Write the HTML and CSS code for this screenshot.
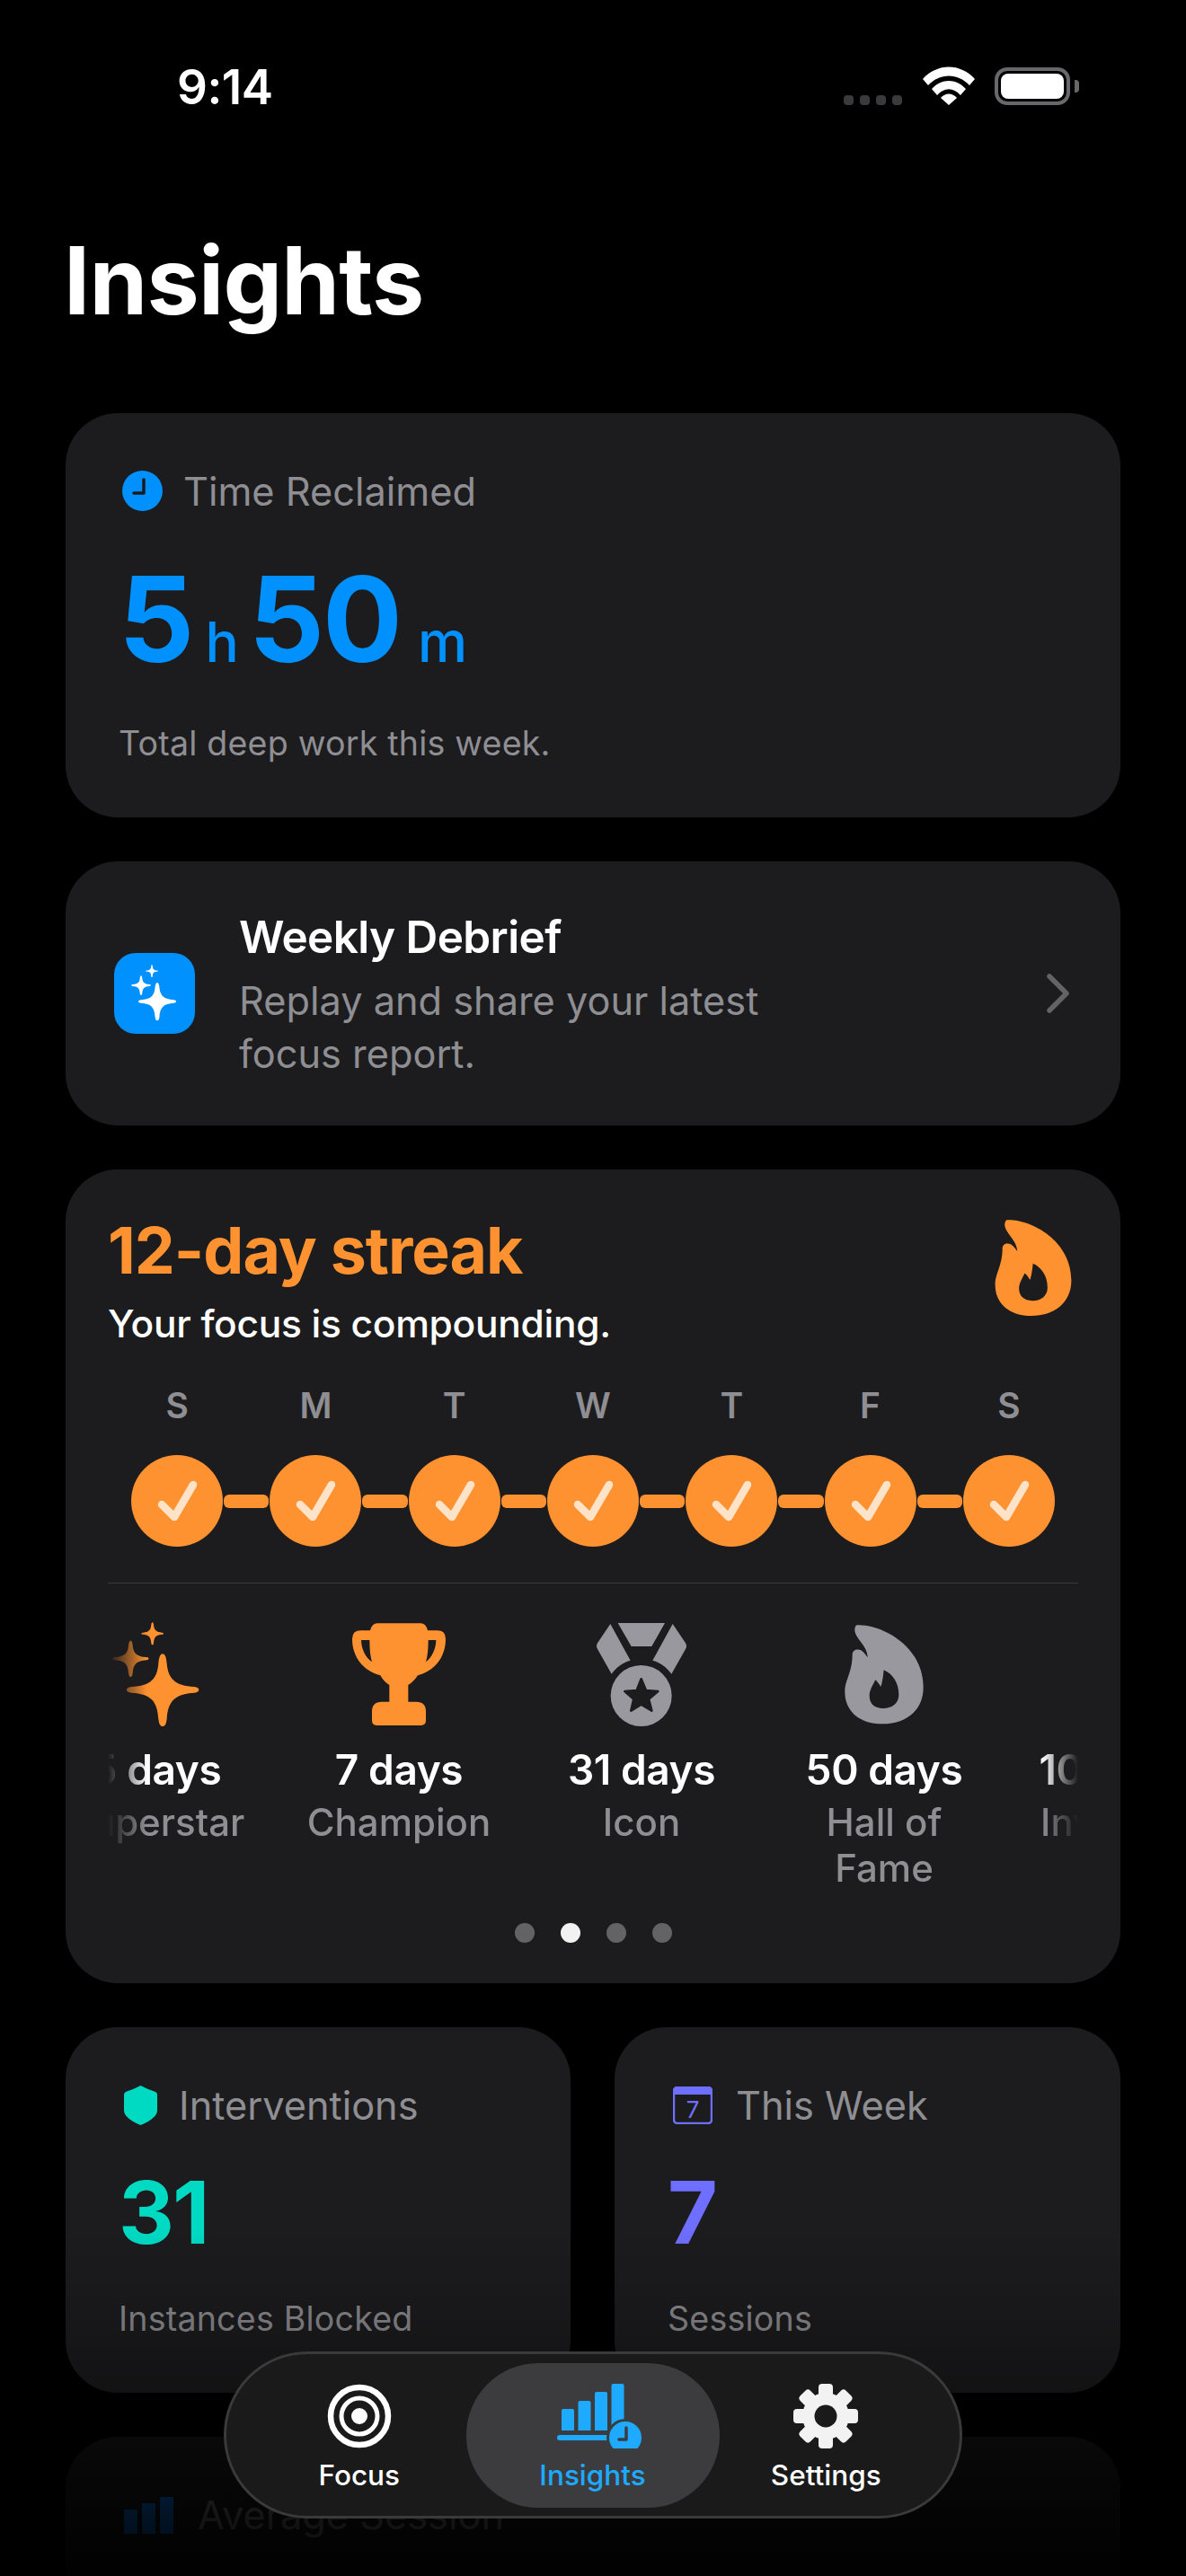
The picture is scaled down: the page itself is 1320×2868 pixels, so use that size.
FILE: index.html
```html
<!DOCTYPE html>
<html lang="en">
<head>
<meta charset="utf-8">
<title>Insights</title>
<link rel="stylesheet" href="styles.css">
</head>
<body>
<svg class="defs" width="0" height="0" aria-hidden="true">
  <defs>
    <path id="spark" d="M0 -120C8 -120 12 -108 14 -88C18 -38 41 -13 106 -10C126 -8 126 8 106 10C41 14 18 37 14 97C12 114 8 122 0 122C-8 122 -12 114 -14 97C-18 37 -39 14 -104 10C-126 8 -126 -8 -104 -10C-39 -13 -18 -38 -14 -88C-12 -108 -8 -120 0 -120Z"/>
    <path id="flame" fill-rule="evenodd" d="M1000 82C1080 78 1222 150 1222 290C1222 370 1160 412 1085 412C1010 412 960 370 960 305C960 265 985 240 985 180C985 165 1000 160 1012 165C1025 172 1032 185 1036 190C1036 150 990 125 993 95C994 88 996 83 1000 82ZM1090 232C1120 245 1140 275 1140 315C1140 345 1115 360 1088 360C1060 360 1042 345 1042 318C1042 300 1052 285 1062 265C1068 270 1075 280 1080 288C1085 275 1088 250 1090 232Z"/>
    <path id="tick" d="M-17 4L-3 18L18 -18" fill="none" stroke="#ffe3c9" stroke-width="8.500" stroke-linecap="round" stroke-linejoin="round"/>
  </defs>
</svg>
<div class="screen">
  <header class="status">
    <span class="clock">9:14</span>
    <div class="status-icons">
      <div class="signal"><i></i><i></i><i></i><i></i></div>
      <svg class="wifi" viewBox="0 0 58 43"><path d="M0 14C16 -4 42 -4 58 14L52 21C39 7 19 7 6 21Z"/><path d="M10 25C21 13 37 13 48 25L42 32C34 23 24 23 16 32Z"/><path d="M20 35C25 29 33 29 38 35L29 43Z"/></svg>
      <div class="battery"><div class="battery-fill"></div></div>
      <div class="battery-nub"></div>
    </div>
  </header>

  <h1 class="page-title">Insights</h1>

  <main class="cards">
    <section class="card card-time">
      <div class="head">
        <svg class="head-icon" viewBox="0 0 45 45"><circle cx="22.500" cy="22.500" r="22.500" fill="#0091ff"/><path d="M24 10V25H13" fill="none" stroke="#1c1c1e" stroke-width="3.500" stroke-linecap="round" stroke-linejoin="round"/></svg>
        <span class="head-label">Time Reclaimed</span>
      </div>
      <div class="big-time">
        <span>5</span><span class="unit">h</span><span class="num-gap">50</span><span class="unit unit-m">m</span>
      </div>
      <p class="caption">Total deep work this week.</p>
    </section>

    <section class="card card-debrief">
      <div class="debrief-icon">
        <svg viewBox="0 0 90 90"><use href="#spark" transform="translate(48 54) scale(.175)" fill="#fff"/><use href="#spark" transform="translate(30 36) scale(.09)" fill="#fff"/><use href="#spark" transform="translate(42 20) scale(.058)" fill="#fff"/></svg>
      </div>
      <div class="debrief-text">
        <h2 class="debrief-title">Weekly Debrief</h2>
        <p class="debrief-sub">Replay and share your latest focus report.</p>
      </div>
      <svg class="chevron" viewBox="0 0 27 44"><path d="M4 3L23 22L4 41" fill="none" stroke="#636366" stroke-width="5.500" stroke-linecap="round" stroke-linejoin="round"/></svg>
    </section>

    <section class="card card-streak">
      <div class="streak-top">
        <div>
          <h2 class="streak-title">12-day streak</h2>
          <p class="streak-sub">Your focus is compounding.</p>
        </div>
        <svg class="streak-flame" viewBox="955 75 272 340"><use href="#flame" fill="#ff9230"/></svg>
      </div>
      <div class="week-letters"><span>S</span><span>M</span><span>T</span><span>W</span><span>T</span><span>F</span><span>S</span></div>
      <div class="week-track">
        <svg class="day" viewBox="-51 -51 102 102"><use href="#tick"/></svg><i class="link"></i>
        <svg class="day" viewBox="-51 -51 102 102"><use href="#tick"/></svg><i class="link"></i>
        <svg class="day" viewBox="-51 -51 102 102"><use href="#tick"/></svg><i class="link"></i>
        <svg class="day" viewBox="-51 -51 102 102"><use href="#tick"/></svg><i class="link"></i>
        <svg class="day" viewBox="-51 -51 102 102"><use href="#tick"/></svg><i class="link"></i>
        <svg class="day" viewBox="-51 -51 102 102"><use href="#tick"/></svg><i class="link"></i>
        <svg class="day" viewBox="-51 -51 102 102"><use href="#tick"/></svg>
      </div>
      <div class="divider"></div>
      <div class="badges-clip">
        <div class="badges">
          <div class="badge">
            <svg class="badge-icon" viewBox="70 72 306 348"><use href="#spark" transform="translate(244 298)" fill="#ff9230"/><use href="#spark" transform="translate(137 194) scale(.5)" fill="#ff9230"/><use href="#spark" transform="translate(210 110) scale(.31)" fill="#ff9230"/></svg>
            <strong>5 days</strong><span>Superstar</span>
          </div>
          <div class="badge">
            <svg class="badge-icon" viewBox="858 72 348 348"><path fill="#ff9230" fill-rule="evenodd" d="M960 76H1105Q1122 76 1128 100H1160Q1188 100 1188 128C1188 190 1150 235 1095 250C1085 265 1075 275 1063 282V338H1090Q1122 338 1122 370V400Q1122 417 1105 417H958Q942 417 942 400V370Q942 338 975 338H1000V282C988 275 978 265 970 250C915 235 876 190 876 128Q876 100 905 100H936Q942 76 960 76ZM906 132C906 160 920 190 942 205C936 185 934 160 934 132ZM1156 132C1156 160 1142 190 1122 205C1128 185 1130 160 1130 132Z"/></svg>
            <strong>7 days</strong><span>Champion</span>
          </div>
          <div class="badge">
            <svg class="badge-icon" viewBox="110 72 348 348"><g fill="#98989e"><path d="M205 75H362L318 153H250Z"/><path d="M180 78L247 200C225 205 200 222 184 245L137 162Q131 152 137 142Z"/><path d="M388 78L321 200C343 205 368 222 384 245L431 162Q437 152 431 142Z"/><circle cx="283" cy="318" r="102"/></g><path fill="#1c1c1e" stroke="#1c1c1e" stroke-width="8" stroke-linejoin="round" d="M283 262L299 300L339 303L308 329L318 368L283 347L249 368L258 329L228 303L268 300Z"/></svg>
            <strong>31 days</strong><span>Icon</span>
          </div>
          <div class="badge">
            <svg class="badge-icon" viewBox="917 72 348 348"><use href="#flame" fill="#98989e"/></svg>
            <strong>50 days</strong><span>Hall of Fame</span>
          </div>
          <div class="badge">
            <svg class="badge-icon" viewBox="917 72 348 348"><use href="#flame" fill="#98989e"/></svg>
            <strong>100 days</strong><span>Invincible</span>
          </div>
        </div>
      </div>
      <div class="pager"><i></i><i class="on"></i><i></i><i></i></div>
    </section>

    <div class="stat-row">
      <section class="card card-stat">
        <div class="head">
          <svg class="shield" viewBox="0 0 37 44"><path fill="#00dac3" d="M18.500 0C24 3 30 5 35 7Q37 8 37 10V28C37 35 26 41 18.500 44C11 41 0 35 0 28V10Q0 8 2 7C7 5 13 3 18.500 0Z"/></svg>
          <span class="head-label">Interventions</span>
        </div>
        <div class="stat-value teal">31</div>
        <p class="caption">Instances Blocked</p>
      </section>
      <section class="card card-stat">
        <div class="head">
          <svg class="calendar" viewBox="0 0 44 42"><rect x="1" y="1" width="42" height="40" rx="4" fill="none" stroke="#6e6eff" stroke-width="2.500"/><path fill="#6e6eff" d="M5 0H39Q44 0 44 5V9H0V5Q0 0 5 0Z"/><text x="22" y="35" class="cal-num">7</text></svg>
          <span class="head-label">This Week</span>
        </div>
        <div class="stat-value indigo">7</div>
        <p class="caption">Sessions</p>
      </section>
    </div>

    <section class="card card-stat">
      <div class="head">
        <svg class="bars" viewBox="0 0 55 41"><path fill="#0a84ff" d="M0 14H15V41H0ZM20 7H35V41H20ZM40 0H55V41H40Z"/></svg>
        <span class="head-label">Average Session</span>
      </div>
    </section>
  </main>

  <div class="fade"></div>

  <nav class="tabbar">
    <a class="tab">
      <svg class="tab-icon" viewBox="0 0 72 72"><circle cx="36" cy="36" r="32" fill="none" stroke="#fff" stroke-width="6.500"/><circle cx="36" cy="36" r="20" fill="none" stroke="#fff" stroke-width="5"/><circle cx="36" cy="36" r="9" fill="#fff"/></svg>
      <span>Focus</span>
    </a>
    <a class="tab tab-on">
      <svg class="tab-icon tab-icon-wide" viewBox="0 0 94 72"><path fill="#1eaaff" d="M5 30Q5 28 7 28H17Q19 28 19 30V52H5ZM23.500 21Q23.500 19 25.500 19H35.500Q37.500 19 37.500 21V52H23.500ZM42 11Q42 9 44 9H54Q56 9 56 11V52H42ZM60.500 2Q60.500 0 62.500 0H72.500Q74.500 0 74.500 2V46H60.500ZM3 57H56V63H3Q0 63 0 60Q0 57 3 57Z"/><circle cx="76" cy="60" r="21" fill="#3c3c3e"/><circle cx="76" cy="60" r="18" fill="#1eaaff"/><path d="M77 49V62H69" fill="none" stroke="#3c3c3e" stroke-width="3.500" stroke-linecap="round" stroke-linejoin="round"/></svg>
      <span>Insights</span>
    </a>
    <a class="tab">
      <svg class="tab-icon" viewBox="-36 -36 72 72"><g fill="#f2f2f2"><rect x="-8" y="-36" width="16" height="72" rx="4"/><rect x="-8" y="-36" width="16" height="72" rx="4" transform="rotate(45)"/><rect x="-8" y="-36" width="16" height="72" rx="4" transform="rotate(90)"/><rect x="-8" y="-36" width="16" height="72" rx="4" transform="rotate(135)"/><circle r="26"/></g><circle r="12.500" fill="#1a1a1a"/></svg>
      <span>Settings</span>
    </a>
  </nav>
</div>
</body>
</html>
```

FILE: styles.css
```css
* { box-sizing: border-box; margin: 0; padding: 0; }
html, body { width: 1320px; height: 2868px; background: #000; overflow: hidden; }
body { font-family: Inter, "Liberation Sans", sans-serif; color: #fff; }
.defs { position: absolute; }
.screen { position: relative; width: 1320px; height: 2868px; overflow: hidden; background: #000; }

/* status bar */
.status { height: 190px; padding: 72px 119px 0 197px; display: flex; justify-content: space-between; align-items: flex-start; }
.clock { font-size: 53px; line-height: 50px; font-weight: 600; letter-spacing: -.5px; }
.status-icons { display: flex; align-items: flex-end; height: 42px; margin-top: 3px; }
.signal { display: flex; gap: 7px; margin-right: 23px; }
.signal i { width: 11px; height: 11px; border-radius: 4px; background: #3a3a3c; }
.wifi { width: 58px; height: 43px; fill: #fff; margin-right: 22px; }
.battery { width: 84px; height: 42px; border: 4px solid #68686a; border-radius: 14px; padding: 3px; }
.battery-fill { width: 100%; height: 100%; background: #fff; border-radius: 8px; }
.battery-nub { width: 5px; height: 14px; margin: 0 0 14px 5px; background: #68686a; border-radius: 0 4px 4px 0; }

.page-title { font-size: 104px; line-height: 130px; font-weight: 700; letter-spacing: -.75px; padding-left: 71px; margin-top: 57px; height: 213px; }

/* cards */
.cards { display: flex; flex-direction: column; gap: 49px; padding: 0 73px; }
.card { background: #1c1c1e; border-radius: 58px; }
.head { display: flex; align-items: center; }
.head-label { font-size: 43.300px; line-height: 52px; color: #8e8e93; font-weight: 400; }
.caption { font-size: 37.600px; line-height: 48px; color: #8e8e93; letter-spacing: .2px; }

.card-time { height: 450px; padding: 64px 59px 0; }
.card-time .head { padding-left: 4px; height: 45px; }
.head-icon { width: 45px; height: 45px; margin-right: 23px; flex: none; }
.big-time { display: flex; align-items: baseline; margin-top: 54px; color: #0091ff; font-size: 132px; line-height: 132px; font-weight: 700; letter-spacing: -2px; height: 132px; }
.unit { font-size: 62px; font-weight: 500; margin-left: 14px; letter-spacing: 0; }
.num-gap { margin-left: 11px; }
.unit-m { margin-left: 19px; }
.card-time .caption { margin-top: 49px; }

.card-debrief { height: 294px; display: flex; align-items: center; padding: 0 56px 0 54px; }
.debrief-icon { width: 90px; height: 90px; border-radius: 24px; background: #0091ff; flex: none; }
.debrief-icon svg { display: block; width: 90px; height: 90px; }
.debrief-text { width: 620px; margin-left: 49px; padding-top: 3.500px; }
.debrief-title { font-size: 49.500px; line-height: 60px; font-weight: 600; letter-spacing: -.6px; }
.debrief-sub { font-size: 43.300px; line-height: 59px; color: #8e8e93; margin-top: 11.500px; }
.chevron { width: 27px; height: 44px; margin-left: auto; }

.card-streak { height: 906px; padding: 54px 47px 0; }
.streak-top { display: flex; justify-content: space-between; align-items: flex-start; }
.streak-title { font-size: 71.500px; line-height: 72px; font-weight: 700; color: #ff9230; letter-spacing: -1px; }
.streak-sub { font-size: 42.500px; line-height: 50px; font-weight: 500; margin-top: 21px; letter-spacing: -.3px; }
.streak-flame { width: 88px; height: 110px; margin: 0 6px 0 0; }
.week-letters { display: grid; grid-template-columns: repeat(7, 1fr); margin-top: 42px; text-align: center; font-size: 39px; line-height: 48px; font-weight: 600; color: #8e8e93; }
.week-track { display: flex; align-items: center; padding: 0 26px; margin-top: 31px; }
.day { width: 102px; height: 102px; border-radius: 50%; background: #ff9230; flex: none; display: block; }
.link { flex: 1; height: 15px; margin: 0 1px; background: #ff9230; border-radius: 6px; }
.divider { height: 1px; background: #3a3a3c; margin-top: 40px; }

.badges-clip { overflow: hidden; margin-top: 43px; -webkit-mask-image: linear-gradient(to right, transparent, #000 44px, #000 1040px, transparent); mask-image: linear-gradient(to right, transparent, #000 44px, #000 1040px, transparent); }
.badges { display: flex; gap: 54px; margin-left: -54px; width: 1500px; height: 335px; }
.badge { width: 216px; flex: none; display: flex; flex-direction: column; align-items: center; text-align: center; }
.badge-icon { width: 116px; height: 116px; display: block; }
.badge strong { font-size: 46px; line-height: 52px; font-weight: 600; margin-top: 22px; letter-spacing: -.4px; }
.badge span { font-size: 42px; line-height: 51px; color: #8e8e93; font-weight: 500; margin-top: 7px; }
.pager { display: flex; justify-content: center; gap: 29px; }
.pager i { width: 22px; height: 22px; border-radius: 50%; background: #636366; }
.pager i.on { background: #f2f2f2; }

.stat-row { display: grid; grid-template-columns: 562px 563px; gap: 49px; }
.card-stat { height: 407px; padding: 65px 59px 0; }
.card-stat .head { padding-left: 6px; height: 44px; }
.shield { width: 37px; height: 44px; margin-right: 24px; flex: none; }
.calendar { width: 44px; height: 42px; margin-right: 26px; flex: none; }
.cal-num { font-size: 26px; fill: #6e6eff; text-anchor: middle; }
.bars { width: 55px; height: 41px; margin-right: 27px; flex: none; }
.stat-value { font-size: 96px; line-height: 96px; font-weight: 700; margin-top: 49px; letter-spacing: -2px; }
.teal { color: #00dac3; }
.indigo { color: #6e6eff; }
.card-stat .caption { margin-top: 47px; }

/* bottom */
.fade { position: absolute; left: 0; right: 0; top: 2480px; bottom: 0; background: linear-gradient(to bottom, rgba(0,0,0,0), rgba(0,0,0,.2) 31%, rgba(0,0,0,.36) 48%, rgba(0,0,0,.68) 60%, rgba(0,0,0,.86) 83%, rgba(0,0,0,.95) 100%); }
.tabbar { position: absolute; left: 249px; top: 2618px; width: 822px; height: 186px; border-radius: 93px; background: #1a1a1a; border: 3px solid #3a3a3a; display: flex; align-items: center; padding: 0 30px 0 29px; }
.tab { flex: 1 1 0; height: 161px; border-radius: 80px; display: flex; flex-direction: column; align-items: center; color: #fff; font-size: 31.500px; line-height: 38px; font-weight: 500; padding-top: 23px; }
.tab-on { flex: 0 0 282px; background: #3c3c3e; color: #1eaaff; }
.tab-icon { width: 72px; height: 72px; display: block; margin-bottom: 11px; flex: none; }
.tab-icon-wide { width: 94px; height: 72px; margin-left: 14px; }
```
